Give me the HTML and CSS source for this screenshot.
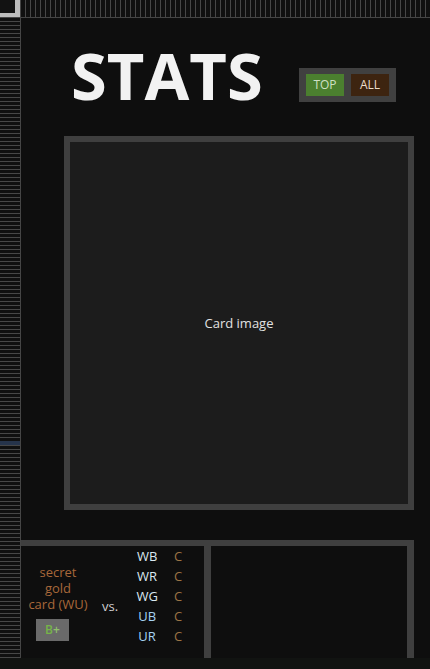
FILE: index.html
```html
<!DOCTYPE html>
<html lang="en">
<head>
<meta charset="utf-8">
<title>Stats</title>
<link rel="stylesheet" href="styles.css">
</head>
<body>
<div class="app">
  <div class="topbar">
    <div class="corner"></div>
    <div class="hstrip"></div>
  </div>
  <div class="body">
    <div class="vstrip"></div>
    <main class="main">
      <header class="header">
        <h1 class="title">STATS</h1>
        <div class="toggle">
          <button class="tbtn tbtn-top">TOP</button>
          <button class="tbtn tbtn-all">ALL</button>
        </div>
      </header>
      <section class="card">
        <span class="card-label">Card image</span>
      </section>
      <section class="panel">
        <div class="pleft">
          <div class="name">
            <div class="name-text">secret gold<br>card (WU)</div>
            <div class="grade">B<span class="plus">+</span></div>
          </div>
          <div class="vs">vs.</div>
          <div class="pairs">
            <span class="pair pair-w">WB</span><span class="pgrade">C</span>
            <span class="pair pair-w">WR</span><span class="pgrade">C</span>
            <span class="pair pair-w">WG</span><span class="pgrade">C</span>
            <span class="pair pair-u">UB</span><span class="pgrade">C</span>
            <span class="pair pair-u">UR</span><span class="pgrade">C</span>
          </div>
        </div>
        <div class="pright"></div>
      </section>
    </main>
  </div>
  <div class="footer"></div>
</div>
</body>
</html>
```
FILE: styles.css
```css
* { box-sizing: border-box; }
html, body { margin: 0; padding: 0; }
body {
  background: #0e0e0e;
  font-family: "Open Sans", "DejaVu Sans", sans-serif;
  width: 430px;
  height: 669px;
  overflow: hidden;
}
.app {
  display: flex;
  flex-direction: column;
  height: 669px;
}
.topbar {
  display: flex;
  height: 18px;
  border-bottom: 1px solid #454545;
  flex: none;
}
.corner {
  width: 20px;
  height: 17px;
  background: #121212;
  border-right: 5px solid #bcbcbc;
  border-bottom: 4px solid #bcbcbc;
}
.hstrip {
  flex: 1;
  border-left: 1px solid #454545;
  background: repeating-linear-gradient(to right, #101010 0, #101010 4px, #474747 4px, #474747 5px);
}
.body {
  display: flex;
  height: 640px;
  flex: none;
}
.vstrip {
  width: 21px;
  flex: none;
  border-right: 1px solid #454545;
  background:
    linear-gradient(to bottom, transparent 0, transparent 423px, #26344b 423px, #26344b 427px, transparent 427px),
    repeating-linear-gradient(to bottom, #101010 0, #101010 3px, #474747 3px, #474747 4px);
}
.main {
  flex: 1;
  display: flex;
  flex-direction: column;
  padding-right: 16px;
}
.header {
  display: flex;
  align-items: flex-start;
  padding-top: 24px;
  padding-left: 50px;
}
.title {
  margin: 0;
  font-family: "Open Sans", sans-serif;
  font-weight: 700;
  font-size: 65px;
  line-height: 67px;
  color: #f2f2f2;
}
.toggle {
  margin-left: auto;
  margin-right: 18px;
  margin-top: 26px;
  display: flex;
  gap: 7px;
  padding: 6px 7px;
  background: #404040;
}
.tbtn {
  width: 38px;
  height: 22px;
  padding: 0;
  border: none;
  font-family: "Open Sans", sans-serif;
  font-size: 12px;
  line-height: 22px;
  text-align: center;
}
.tbtn-top { background: #4b7f2f; color: #cfe0c4; }
.tbtn-all { background: #3d2410; color: #ecdccb; }
.card {
  margin: 27px 0 0 43px;
  height: 374px;
  flex: none;
  border: 6px solid #3f3f3f;
  background: #1c1c1c;
  display: flex;
  align-items: center;
  justify-content: center;
}
.card-label {
  color: #e2e2e2;
  font-size: 13px;
}
.panel {
  margin-top: 30px;
  flex: 1;
  display: flex;
  border-top: 6px solid #3f3f3f;
  border-right: 7px solid #3f3f3f;
}
.pleft {
  width: 190px;
  flex: none;
  border-right: 7px solid #3f3f3f;
  display: flex;
  align-items: center;
  padding-left: 6px;
  font-size: 13px;
}
.pright { flex: 1; }
.name {
  width: 62px;
  display: flex;
  flex-direction: column;
  align-items: center;
}
.name-text {
  width: 62px;
  color: #a8683a;
  text-align: center;
  line-height: 16px;
}
.grade {
  margin-top: 7px;
  margin-right: 11px;
  width: 33px;
  height: 22px;
  background: #6a6a6a;
  color: #76b548;
  font-weight: 600;
  font-size: 12px;
  line-height: 22px;
  text-align: center;
}
.grade .plus { color: #8fc06a; }
.vs {
  margin-left: 13px;
  padding-top: 8px;
  color: #d0d0d0;
}
.pairs {
  align-self: flex-start;
  margin-left: 16px;
  display: grid;
  grid-template-columns: 26px auto;
  column-gap: 14px;
  line-height: 20px;
}
.pair { text-align: center; }
.pair-w { color: #dbe8f2; }
.pair-u { color: #a6d3f3; }
.pgrade { color: #9c7444; }
.footer {
  flex: 1;
  background: #111311;
}
```
